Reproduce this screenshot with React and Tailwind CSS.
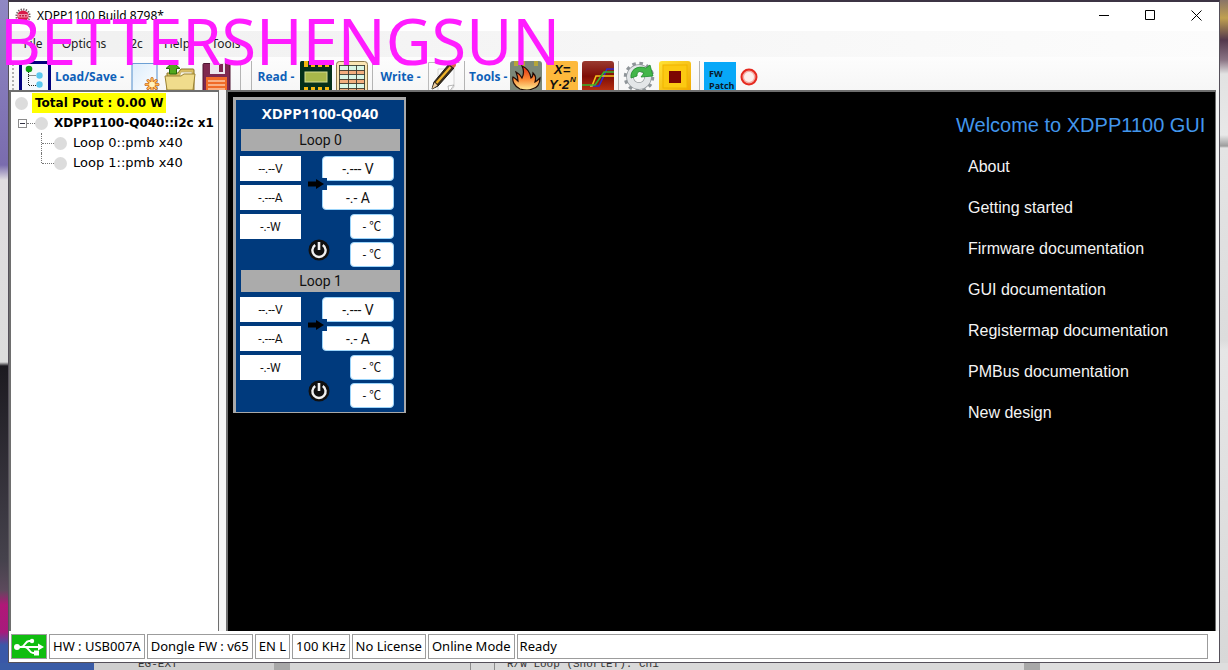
import React from 'react';

const docLinks = [
    'About',
    'Getting started',
    'Firmware documentation',
    'GUI documentation',
    'Registermap documentation',
    'PMBus documentation',
    'New design',
];

const menus = [
    { label: 'File', width: 'w-[38px]' },
    { label: 'Options', width: 'w-[64px]' },
    { label: 'i2c', width: 'w-[38px]' },
    { label: 'Help', width: 'w-[46px]' },
    { label: 'Tools', width: 'w-[52px]' },
];

const statusCells = ['HW : USB007A', 'Dongle FW : v65', 'EN L', '100 KHz', 'No License', 'Online Mode'];

const AppIcon = () => (
    <svg className="w-4 h-4" viewBox="0 0 16 16">
        <circle cx="8" cy="8" r="6.600" fill="none" stroke="#6a5a60" strokeWidth="2" strokeDasharray="1.300 1.290" />
        <circle cx="8" cy="8" r="5.600" fill="#d81848" />
        <rect x="3" y="6" width="10" height="3.400" rx="1" fill="#f08ca4" />
        <path d="M4.500 7.700h1.400M7.200 7.700h1.600M10.200 7.700h1.400" stroke="#b00c34" strokeWidth="1.400" />
    </svg>
);

const TreeIcon = () => (
    <svg className="w-8 h-8" viewBox="0 0 32 32">
        <rect x="1.5" y="1.5" width="29" height="32" fill="#f4f8fb" stroke="#00007c" strokeWidth="3" />
        <path d="M9.5 11v13.500H17M9.500 14.500H17" fill="none" stroke="#222" strokeDasharray="1 1" />
        <circle cx="10" cy="8" r="3.300" fill="#0a9a10" />
        <circle cx="20.500" cy="14.500" r="3.200" fill="#5ac8ef" />
        <circle cx="20.500" cy="23.500" r="3.200" fill="#5ac8ef" />
    </svg>
);

const NewFileIcon = () => (
    <svg className="w-8 h-8" viewBox="0 0 32 32">
        <defs>
            <linearGradient id="sheet" x1="0" y1="0" x2="1" y2="1">
                <stop offset="0" stopColor="#dcecfb" />
                <stop offset="1" stopColor="#ffffff" />
            </linearGradient>
        </defs>
        <rect x="4" y="2.500" width="25" height="30" rx="1" fill="url(#sheet)" stroke="#6c9fd4" strokeWidth="1.200" />
        <g stroke="#b4521c" strokeWidth="3" strokeLinecap="round">
            <path d="M24 17.500v12M18 23.500h12M20 19.500l8 8M28 19.500l-8 8" />
        </g>
        <g stroke="#ffb84e" strokeWidth="1.800" strokeLinecap="round">
            <path d="M24 17.500v12M18 23.500h12M20 19.500l8 8M28 19.500l-8 8" />
        </g>
        <circle cx="24" cy="23.500" r="2.800" fill="#fff2c0" />
    </svg>
);

const OpenIcon = () => (
    <svg className="w-8 h-8" viewBox="0 0 32 32">
        <path d="M3 12h11l3-4h12q1 0 1 1v20H3z" fill="#d9bd62" stroke="#8d7428" />
        <path d="M17 11h11v6H15z" fill="#f7f3e3" stroke="#b7a668" strokeWidth=".6" />
        <path d="M1 15h16l3-2h11l-2 16H3z" fill="#f0dc8c" stroke="#9a8233" />
        <path d="M9 1l7 6.500h-3.500V13h-7V7.500H2z" fill="#52a81e" stroke="#25680b" />
    </svg>
);

const SaveIcon = () => (
    <svg className="w-8 h-8" viewBox="0 0 32 32">
        <path d="M4 2.500h25q1 0 1 1V32H5l-2-2V3.500q0-1 1-1z" fill="#7e2950" stroke="#4e1531" />
        <rect x="10" y="2" width="15" height="11" fill="#ece8ee" />
        <rect x="19" y="3" width="4" height="8" fill="#7e2950" />
        <rect x="6" y="16" width="21" height="14" fill="#f06a28" />
        <path d="M8 20h17M8 24h17M8 28h17" stroke="#fbc8a4" strokeWidth="1.500" />
    </svg>
);

const ChipIcon = () => (
    <svg className="w-8 h-8" viewBox="0 0 32 32">
        <rect width="32" height="32" rx="1.500" fill="#04301a" />
        <path d="M4 0h4v6H4zM11 0h4v6h-4zM18 0h4v6h-4zM25 0h4v6h-4zM4 26h4v6H4zM11 26h4v6h-4zM18 26h4v6h-4zM25 26h4v6h-4z" fill="#f2b711" />
        <rect x="5" y="11" width="22" height="10" fill="#a8b84a" stroke="#d5dd92" />
    </svg>
);

const TableIcon = () => (
    <svg className="w-8 h-8" viewBox="0 0 32 32">
        <rect x=".5" y=".5" width="31" height="33" rx="3" fill="#fbe6b4" stroke="#8c7a4e" />
        <rect x="3" y="4" width="26" height="28" fill="#d9f6e6" />
        <path d="M3 9h26v4H3zM3 18h26v5H3zM3 27h26v4H3z" fill="#f2ae7e" />
        <path d="M3.500 4v28M12.500 4v28M20.500 4v28M28.500 4v28M3 4.500h26M3 9.500h26M3 13.500h26M3 18.500h26M3 22.500h26M3 27.500h26" stroke="#3d3d30" strokeWidth=".9" />
    </svg>
);

const PencilIcon = () => (
    <svg className="w-8 h-8" viewBox="0 0 32 32">
        <path d="M.5 34V1.500M.5 1.500h31" stroke="#bcbcbc" fill="none" />
        <path d="M10 8h16v18l-5 6H10z" fill="#fafafa" stroke="#d4d4d4" />
        <path d="M26 24l-6 1 1 6z" fill="#fff" stroke="#999" strokeWidth=".7" />
        <path d="M21 3l5 4L10 25l-6 3 2-7z" fill="#3d2f1b" stroke="#1c1812" />
        <path d="M22.500 6L8.500 22" stroke="#f0b429" strokeWidth="2.200" />
        <path d="M6.500 21.500l3 3L4 28z" fill="#eccda0" />
        <path d="M22 2q3-2 5 0t0 4l-1 1-5-4z" fill="#d86848" />
    </svg>
);

const FireIcon = () => (
    <svg className="w-8 h-8" viewBox="0 0 32 32">
        <defs>
            <linearGradient id="flame" x1="0" y1="0" x2="0" y2="1">
                <stop offset="0" stopColor="#e42a12" />
                <stop offset=".55" stopColor="#fa8a34" />
                <stop offset="1" stopColor="#fff09a" />
            </linearGradient>
        </defs>
        <rect width="32" height="34" rx="3" fill="#7b8878" />
        <path d="M4 0h4v5H4zM11 0h4v5h-4zM24 0h4v5h-4z" fill="#b5a63a" />
        <path d="M10 28C4 25 2 20 3 16c2 1 3 2 5 4 0-4-1-6-2-9 4 2 5 4 6 6 2-4 2-8 0-12 5 2 8 6 9 12 2-1 2-3 2-5 3 3 3 5 2 9 2-1 3-2 5-4 0 6-3 10-8 11-4 2-8 1-12 0z" fill="url(#flame)" stroke="#210a04" strokeWidth="1.200" />
    </svg>
);

const FormulaIcon = () => (
    <svg className="w-8 h-8" viewBox="0 0 32 32">
        <rect width="32" height="34" rx="2" fill="#fdb93c" />
        <g fill="#111" fontFamily="Liberation Sans, sans-serif" fontWeight="bold" fontStyle="italic">
            <text x="8" y="13" fontSize="13">X=</text>
            <text x="3" y="28" fontSize="13">Y·2</text>
            <text x="24" y="21" fontSize="8">N</text>
        </g>
    </svg>
);

const ChartIcon = () => (
    <svg className="w-8 h-8" viewBox="0 0 32 32">
        <defs>
            <linearGradient id="plot" x1="0" y1="0" x2="0" y2="1">
                <stop offset="0" stopColor="#9a3a30" />
                <stop offset=".45" stopColor="#7d0d06" />
                <stop offset="1" stopColor="#c93a14" />
            </linearGradient>
        </defs>
        <rect width="32" height="34" rx="3" fill="url(#plot)" />
        <g fill="none" strokeWidth="1.600">
            <path d="M8 25h9L25 8h7" stroke="#2f2ad0" />
            <path d="M8 25h2l4-10h18" stroke="#f2c21c" />
            <path d="M0 24h13l9-13h10" stroke="#33b52c" />
        </g>
    </svg>
);

const GearIcon = () => (
    <svg className="w-8 h-8" viewBox="0 0 32 32">
        <circle cx="16" cy="16" r="13.500" fill="none" stroke="#8f9599" strokeWidth="3.500" strokeDasharray="3.500 3.568" />
        <circle cx="16" cy="16" r="9" fill="none" stroke="#92989b" strokeWidth="7.500" />
        <circle cx="16" cy="16" r="9" fill="none" stroke="#e3e6e8" strokeWidth="6" />
        <path d="M8 17c-1-8 6-13 15-10l4-3 3 11-12 1 3-4c-5-3-7-1-7 3z" fill="#43b649" stroke="#1f8a2c" strokeWidth=".8" />
    </svg>
);

const StopIcon = () => (
    <svg className="w-8 h-8" viewBox="0 0 32 32">
        <defs>
            <linearGradient id="gold" x1="0" y1="0" x2="1" y2="1">
                <stop offset="0" stopColor="#ffe236" />
                <stop offset="1" stopColor="#f0a600" />
            </linearGradient>
        </defs>
        <rect width="32" height="32" rx="3" fill="url(#gold)" />
        <rect x="4" y="4" width="24" height="23" fill="#fcc912" stroke="#efb400" />
        <rect x="10" y="10" width="12" height="12" fill="#7c0502" />
    </svg>
);

const RecordIcon = () => (
    <svg className="w-[18px] h-8" viewBox="0 0 18 32">
        <circle cx="9" cy="16" r="7.500" fill="#f4aaa2" stroke="#e5291f" strokeWidth="2" />
        <circle cx="9" cy="16" r="5" fill="#fdeeeb" />
    </svg>
);

const UsbIcon = () => (
    <svg className="w-[34px] h-[23px]" viewBox="0 0 34 23">
        <rect width="34" height="23" fill="#10bd10" />
        <g fill="none" stroke="#fff" strokeWidth="2">
            <path d="M4 12h24M9 12c4 0 4-6 8-6h4M13 12c4 0 4 6 8 6h3" />
        </g>
        <circle cx="5" cy="12" r="3" fill="#fff" />
        <circle cx="20" cy="6" r="2.200" fill="#fff" />
        <rect x="22" y="15.500" width="5" height="5" fill="#fff" />
        <path d="M26 8.500l6 3.500-6 3.500z" fill="#fff" />
    </svg>
);

const PowerIcon = () => (
    <svg className="w-[22px] h-[22px]" viewBox="0 0 22 22">
        <circle cx="11" cy="11" r="10.500" fill="#101010" />
        <path d="M7.200 6a6.600 6.600 0 1 0 7.600 0" fill="none" stroke="#f2f2f2" strokeWidth="2.400" />
        <path d="M11 3v8" stroke="#f2f2f2" strokeWidth="2.600" />
    </svg>
);

const ToolButton = ({ label, children }) => (
    <button type="button" aria-label={label} className="shrink-0">
        {children}
    </button>
);

const TextButton = ({ width, children }) => (
    <button
        type="button"
        className={`${width} h-8 shrink-0 whitespace-nowrap text-center text-xs font-bold text-[#0d60b8] font-['Open_Sans',sans-serif]`}
    >
        {children}
    </button>
);

const Separator = ({ className = '' }) => <div className={`w-px h-8 shrink-0 bg-[#b4b4b4] ${className}`} />;

const TitleBar = () => (
    <header className="flex h-[27px] items-center bg-white pl-1.5">
        <AppIcon />
        <h1 className="ml-1.5 flex-1 text-xs text-black">XDPP1100 Build 8798*</h1>
        <button type="button" aria-label="Minimize" className="flex h-full w-[46px] items-center justify-center">
            <svg className="w-[11px] h-[11px]" viewBox="0 0 11 11"><path d="M0 5.500h10" stroke="#000" /></svg>
        </button>
        <button type="button" aria-label="Maximize" className="flex h-full w-[46px] items-center justify-center">
            <svg className="w-[11px] h-[11px]" viewBox="0 0 11 11"><path d="M.5.5h9v9h-9z" fill="none" stroke="#000" /></svg>
        </button>
        <button type="button" aria-label="Close" className="flex h-full w-[46px] items-center justify-center">
            <svg className="w-[11px] h-[11px]" viewBox="0 0 11 11"><path d="M.5.5l10 10M10.500.5l-10 10" stroke="#000" /></svg>
        </button>
    </header>
);

const MenuBar = () => (
    <nav className="mt-0.5 flex h-[26px] items-center bg-gradient-to-r from-[#f0f0f0] to-[#fcfcfc] pl-[5px]">
        {menus.map((menu) => (
            <button key={menu.label} type="button" className={`${menu.width} text-center text-xs text-[#222]`}>
                {menu.label}
            </button>
        ))}
    </nav>
);

const Toolbar = () => (
    <div className="flex h-[33px] items-start gap-1 overflow-hidden bg-gradient-to-b from-[#fdfdfd] to-[#f6f6f6] pl-0.5 pt-1">
        <div className="ml-px w-[3px] h-8 shrink-0 border-l-2 border-dotted border-[#b0b0b0]" />
        <ToolButton label="Device tree"><TreeIcon /></ToolButton>
        <TextButton width="w-[69px]">Load/Save -</TextButton>
        <ToolButton label="New design"><NewFileIcon /></ToolButton>
        <ToolButton label="Open design"><OpenIcon /></ToolButton>
        <ToolButton label="Save design"><SaveIcon /></ToolButton>
        <Separator className="ml-1" />
        <Separator className="ml-1.5" />
        <TextButton width="w-10">Read -</TextButton>
        <ToolButton label="Read device"><ChipIcon /></ToolButton>
        <ToolButton label="Register map"><TableIcon /></ToolButton>
        <Separator />
        <TextButton width="w-[47px]">Write -</TextButton>
        <ToolButton label="Write device"><PencilIcon /></ToolButton>
        <Separator />
        <TextButton width="w-[37px]">Tools -</TextButton>
        <ToolButton label="Burn firmware"><FireIcon /></ToolButton>
        <ToolButton label="Formula"><FormulaIcon /></ToolButton>
        <ToolButton label="Ramp chart"><ChartIcon /></ToolButton>
        <Separator />
        <ToolButton label="Refresh"><GearIcon /></ToolButton>
        <ToolButton label="Stop"><StopIcon /></ToolButton>
        <Separator className="ml-1" />
        <button
            type="button"
            className="mt-px h-8 w-8 shrink-0 bg-[#07a8f8] px-[5px] pt-1 text-left text-[9px] font-bold leading-3 text-[#0a1a2a] font-['Open_Sans',sans-serif]"
        >
            FW Patch
        </button>
        <ToolButton label="Record"><RecordIcon /></ToolButton>
    </div>
);

const Dot = () => <span className="h-[13px] w-[13px] shrink-0 rounded-full bg-[#dcdcdc]" />;

const DeviceTree = () => (
    <aside className="w-[210px] shrink-0 overflow-hidden whitespace-nowrap border-l-2 border-t-2 border-r border-[#6e6e6e] bg-white pt-px text-[13px] leading-5 text-black font-['DejaVu_Sans',Verdana,sans-serif]">
        <ul>
            <li className="flex h-5 items-center gap-1 pl-1">
                <Dot />
                <span className="bg-[#ffff00] px-[3px] text-xs font-bold leading-5">Total Pout : 0.00 W</span>
            </li>
            <li>
                <div className="flex h-5 items-center pl-[7px]">
                    <span className="flex h-[9px] w-[9px] shrink-0 items-center justify-center border border-[#8c8c8c]">
                        <span className="h-px w-[5px] bg-[#334]" />
                    </span>
                    <span className="w-2 shrink-0 border-t border-dotted border-[#777]" />
                    <Dot />
                    <span className="ml-1.5 text-xs font-bold">XDPP1100-Q040::i2c x1</span>
                </div>
                <ul className="pl-[30px]">
                    {['Loop 0::pmb x40', 'Loop 1::pmb x40'].map((loop) => (
                        <li key={loop} className="group flex h-5 items-center">
                            <span className="h-5 border-l border-dotted border-[#777] group-last:mb-auto group-last:h-2.5" />
                            <span className="w-3 border-t border-dotted border-[#777]" />
                            <Dot />
                            <span className="ml-1.5">{loop}</span>
                        </li>
                    ))}
                </ul>
            </li>
        </ul>
    </aside>
);

const Input = ({ children }) => (
    <div className="flex h-[25px] w-[61px] items-center justify-center bg-white text-xs">{children}</div>
);

const Output = ({ children }) => (
    <div className="flex h-[25px] w-[72px] items-center justify-center rounded-sm border border-[#9bd4fa] bg-white text-sm">
        {children}
    </div>
);

const Temperature = () => (
    <div className="flex h-[25px] w-11 items-center justify-center rounded-sm border border-[#9bd4fa] bg-white text-xs">
        - ℃
    </div>
);

const LoopSection = ({ name }) => (
    <section className="text-[#111]">
        <h3 className="ml-[5px] mr-1 h-[22px] bg-[#ababab] text-center text-sm leading-[22px]">{name}</h3>
        <div className="relative ml-1 mt-[5px] flex w-[154px] flex-col gap-1">
            <div className="flex justify-between">
                <Input>--.--V</Input>
                <Output>-.--- V</Output>
            </div>
            <div className="flex justify-between">
                <Input>-.---A</Input>
                <Output>-.- A</Output>
            </div>
            <div className="flex justify-between">
                <Input>-.-W</Input>
                <Temperature />
            </div>
            <div className="flex h-6 items-end justify-end gap-5">
                <button type="button" aria-label={`${name} power`} className="self-start -mt-1"><PowerIcon /></button>
                <Temperature />
            </div>
            <svg className="absolute left-[68px] top-[22px] h-3 w-[19px]" viewBox="0 0 19 12">
                <path d="M14 0h5v12h-5z" fill="#003a7d" />
                <path d="M0 3.500h8V1l8 5-8 5V8.500H0z" fill="#000" />
            </svg>
        </div>
    </section>
);

const DeviceCard = () => (
    <article className="h-fit w-[173px] border-[#a9a9a9] border-t-[3px] border-l-[3px] border-r-2 border-b bg-[#003a7d] pb-1 font-[Roboto,'Noto_Sans_CJK_SC',sans-serif]">
        <h2 className="h-[29px] text-center text-[15px] font-bold leading-[26px] text-white font-['Open_Sans',sans-serif]">
            XDPP1100-Q040
        </h2>
        <div className="flex flex-col gap-[3px]">
            <LoopSection name="Loop 0" />
            <LoopSection name="Loop 1" />
        </div>
    </article>
);

const Welcome = () => (
    <div className="ml-auto w-[259px] shrink-0 pt-3.5 font-['Liberation_Sans',Arial,sans-serif]">
        <h2 className="whitespace-nowrap text-xl leading-7 text-[#4296ec]">Welcome to XDPP1100 GUI</h2>
        <ul className="ml-3 mt-[7px]">
            {docLinks.map((label) => (
                <li key={label} className="flex h-[41px] items-center">
                    <a href="#" className="text-base text-[#f4f4f4]">{label}</a>
                </li>
            ))}
        </ul>
    </div>
);

const StatusBar = () => (
    <footer className="flex h-[31px] items-center gap-0.5 bg-white pl-0.5 pr-[11px] text-[13px] text-black">
        <div className="flex h-[25px] items-center border border-[#9c9c9c]"><UsbIcon /></div>
        {statusCells.map((cell) => (
            <div key={cell} className="flex h-[25px] items-center whitespace-nowrap border border-[#9c9c9c] px-[3px]">
                {cell}
            </div>
        ))}
        <div className="flex h-[25px] flex-1 items-center border border-[#9c9c9c] px-0.5">Ready</div>
    </footer>
);

// Strips of the desktop that show around the window
const DesktopLeft = () => (
    <div className="w-2 shrink-0 bg-[linear-gradient(to_bottom,#9088c4_0,#7a6cae_165px,#e0dce0_180px,#dcdcdc_362px,#1c1a20_366px,#45424c_560px,#5c4a5c_590px,#b01878_605px,#a81a7c_632px,#3a58a8_645px)]" />
);

const DesktopRight = () => (
    <div className="w-2 shrink-0 bg-[linear-gradient(to_bottom,#8a7468_0,#c0a050_18px,#54384c_40px,#8a7484_60px,#e2e2e2_74px,#e8e8e8_135px,#9c9c9c_146px,#e4e4e4_148px,#dcdcdc_340px,#e6e6e6_350px,#d8d8d8_100%)]" />
);

const DesktopBottom = () => (
    <div className="flex h-[7px] overflow-hidden bg-[#d9d9d9] font-['Liberation_Mono',monospace] text-[11px] leading-none text-[#333]">
        <div className="w-[94px] bg-[#3a5ca6]" />
        <div className="w-[180px] bg-[#cfcfcf] pl-11">
            <span className="-mt-1 block">EG-EXT</span>
        </div>
        <div className="w-4 bg-[#a8a8a8]" />
        <div className="w-[180px] bg-[#d6d6d6]" />
        <div className="w-[25px] border-x border-[#8c8c8c]" />
        <div className="flex-1 pl-3">
            <span className="-mt-1 block">R/W Loop (ShortET): Ch1</span>
        </div>
        <div className="w-4 bg-[#a8a8a8]" />
        <div className="w-[188px] bg-[#dedede]" />
    </div>
);

const App = () => (
    <div className="relative flex min-h-screen flex-col overflow-hidden font-['Noto_Sans',sans-serif]">
        <div className="flex flex-1">
            <DesktopLeft />
            <div className="flex min-w-0 flex-1 flex-col border border-t-2 border-[#55505a] border-t-[#3c3444] bg-white">
                <TitleBar />
                <MenuBar />
                <Toolbar />
                <main className="flex flex-1 bg-[#f4f4f4] pr-[3px]">
                    <DeviceTree />
                    <div className="ml-[7px] flex min-w-0 flex-1 border-l-2 border-t-2 border-r border-[#6e6e6e] bg-black pl-[5px] pt-[5px]">
                        <DeviceCard />
                        <Welcome />
                    </div>
                </main>
                <StatusBar />
            </div>
            <DesktopRight />
        </div>
        <DesktopBottom />
        <p className="pointer-events-none absolute left-0 top-0 whitespace-nowrap text-[63px] leading-[82px] text-[#ff1cff]">
            BETTERSHENGSUN
        </p>
    </div>
);

export default App;
